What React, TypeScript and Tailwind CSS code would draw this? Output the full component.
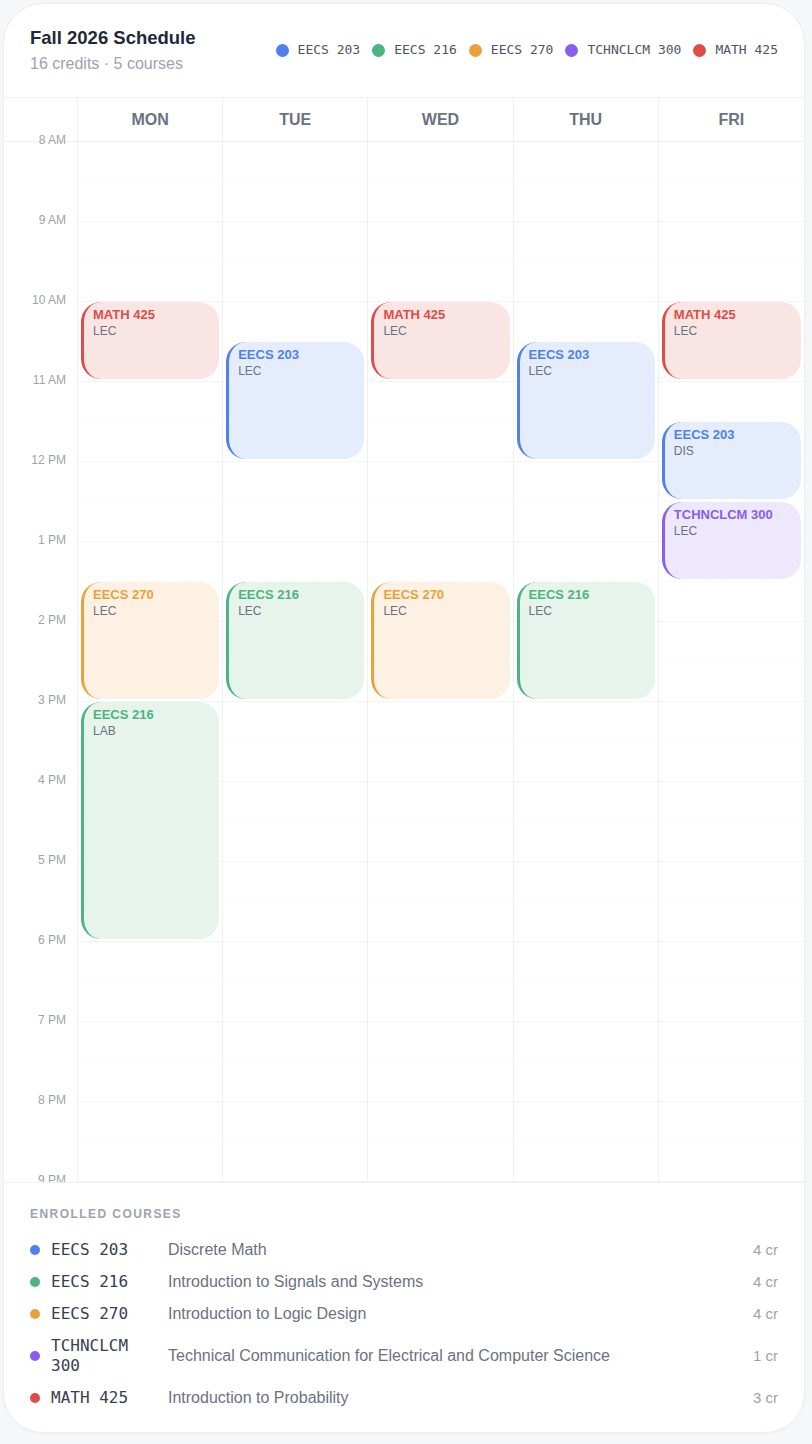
import React from "react";

type Course = {
    code: string;
    title: string;
    credits: number;
    dot: string;
    block: string;
};

const courses: Course[] = [
    { code: "EECS 203", title: "Discrete Math", credits: 4, dot: "bg-[#4f80ee]", block: "bg-[#e5edfc] border-[#4f80ee] text-[#4f80ee]" },
    { code: "EECS 216", title: "Introduction to Signals and Systems", credits: 4, dot: "bg-[#4db380]", block: "bg-[#e6f4ec] border-[#4db380] text-[#4db380]" },
    { code: "EECS 270", title: "Introduction to Logic Design", credits: 4, dot: "bg-[#e9a23b]", block: "bg-[#fcf1e2] border-[#e9a23b] text-[#e9a23b]" },
    { code: "TCHNCLCM 300", title: "Technical Communication for Electrical and Computer Science", credits: 1, dot: "bg-[#8a5cf0]", block: "bg-[#eee8fd] border-[#8a5cf0] text-[#8a5cf0]" },
    { code: "MATH 425", title: "Introduction to Probability", credits: 3, dot: "bg-[#dc4d47]", block: "bg-[#f9e5e3] border-[#dc4d47] text-[#dc4d47]" },
];

const byCode = (code: string) => courses.find((c) => c.code === code)!;

// start / end in hours, 24h clock
const meetings: { day: number; code: string; kind: string; start: number; end: number }[] = [
    { day: 0, code: "MATH 425", kind: "LEC", start: 10, end: 11 },
    { day: 0, code: "EECS 270", kind: "LEC", start: 13.5, end: 15 },
    { day: 0, code: "EECS 216", kind: "LAB", start: 15, end: 18 },
    { day: 1, code: "EECS 203", kind: "LEC", start: 10.5, end: 12 },
    { day: 1, code: "EECS 216", kind: "LEC", start: 13.5, end: 15 },
    { day: 2, code: "MATH 425", kind: "LEC", start: 10, end: 11 },
    { day: 2, code: "EECS 270", kind: "LEC", start: 13.5, end: 15 },
    { day: 3, code: "EECS 203", kind: "LEC", start: 10.5, end: 12 },
    { day: 3, code: "EECS 216", kind: "LEC", start: 13.5, end: 15 },
    { day: 4, code: "MATH 425", kind: "LEC", start: 10, end: 11 },
    { day: 4, code: "EECS 203", kind: "DIS", start: 11.5, end: 12.5 },
    { day: 4, code: "TCHNCLCM 300", kind: "LEC", start: 12.5, end: 13.5 },
];

const days = ["MON", "TUE", "WED", "THU", "FRI"];
const hours = ["8 AM", "9 AM", "10 AM", "11 AM", "12 PM", "1 PM", "2 PM", "3 PM", "4 PM", "5 PM", "6 PM", "7 PM", "8 PM", "9 PM"];
const HOUR = 80;

const App = () => {
    return (
        <div className="min-h-screen bg-[#f6f7f9] pt-[3px] pl-[3px] font-['Liberation_Sans',Arial,sans-serif]">
            <div className="w-[802px] h-[1430px] bg-white border border-[#eceef1] rounded-[40px] overflow-hidden flex flex-col shadow-[0_1px_3px_rgba(0,0,0,0.03)]">

                {/* Header */}
                <div className="h-[94px] shrink-0 border-b border-[#eef0f2] px-[26px] pt-[21px] flex justify-between items-start">
                    <div>
                        <h1 className="text-[18.5px] leading-[26px] font-bold text-[#1f2937]">Fall 2026 Schedule</h1>
                        <p className="mt-[3px] text-[16px] leading-[20px] text-[#9ca3af]">16 credits · 5 courses</p>
                    </div>
                    <div className="mt-[15px] flex items-center gap-3">
                        {courses.map((c) => (
                            <div key={c.code} className="flex items-center gap-[9px]">
                                <span className={`w-[13px] h-[13px] rounded-full ${c.dot}`} />
                                <span className="font-['DejaVu_Sans_Mono',monospace] text-[13px] leading-[20px] text-[#4b5563]">{c.code}</span>
                            </div>
                        ))}
                    </div>
                </div>

                {/* Calendar */}
                <div className="shrink-0 h-[1084px] overflow-hidden">
                    <div className="grid grid-cols-[74px_repeat(5,1fr)] border-b border-[#eef0f2]">
                        <div className="h-[43px] border-r border-[#eef0f2]" />
                        {days.map((d, i) => (
                            <div key={d} className={`h-[43px] flex items-center justify-center text-[16px] font-bold text-[#6b7280] ${i < 4 ? "border-r border-[#eef0f2]" : ""}`}>
                                {d}
                            </div>
                        ))}
                    </div>
                    <div className="grid grid-cols-[74px_repeat(5,1fr)]">
                        <div className="relative border-r border-[#eef0f2]">
                            {hours.map((h, i) => (
                                <div
                                    key={h}
                                    className="absolute right-[11px] text-[12px] leading-[16px] text-[#9ca3af] z-10"
                                    style={{ top: i * HOUR - 10 }}
                                >
                                    {h}
                                </div>
                            ))}
                        </div>
                        {days.map((d, di) => (
                            <div key={d} className={`relative ${di < 4 ? "border-r border-[#eef0f2]" : ""}`}>
                                {hours.map((h) => (
                                    <div key={h} className="h-[80px] border-b border-[#f3f4f6]">
                                        <div className="h-[40px] border-b border-dashed border-[#f7f8f9]" />
                                    </div>
                                ))}
                                {meetings.filter((m) => m.day === di).map((m, idx) => {
                                    const c = byCode(m.code);
                                    return (
                                        <div
                                            key={idx}
                                            className={`absolute left-[3px] right-[3px] rounded-[20px] border-l-[3px] pl-[9px] pt-[5px] overflow-hidden ${c.block}`}
                                            style={{ top: (m.start - 8) * HOUR, height: (m.end - m.start) * HOUR - 3 }}
                                        >
                                            <div className="text-[13px] leading-[16px] font-bold">{m.code}</div>
                                            <div className="text-[12px] leading-[16px] text-[#6b7280]">{m.kind}</div>
                                        </div>
                                    );
                                })}
                            </div>
                        ))}
                    </div>
                </div>

                {/* Enrolled courses */}
                <div className="flex-1 border-t border-[#eef0f2] px-[26px] pt-[23px]">
                    <h2 className="text-[12px] leading-[16px] font-bold tracking-[0.12em] text-[#9ca3af]">ENROLLED COURSES</h2>
                    <div className="mt-[18px] flex flex-col gap-3">
                        {courses.map((c) => (
                            <div key={c.code} className="flex items-center">
                                <span className={`w-2.5 h-2.5 rounded-full shrink-0 ${c.dot}`} />
                                <span className="ml-[11px] w-[105px] shrink-0 font-['DejaVu_Sans_Mono',monospace] text-[16px] leading-[20px] text-[#374151]">{c.code}</span>
                                <span className="ml-3 flex-1 text-[16px] leading-[20px] text-[#6b7280]">{c.title}</span>
                                <span className="ml-3 text-[15px] leading-[20px] text-[#9ca3af]">{c.credits} cr</span>
                            </div>
                        ))}
                    </div>
                </div>
            </div>
        </div>
    );
};

export default App;
